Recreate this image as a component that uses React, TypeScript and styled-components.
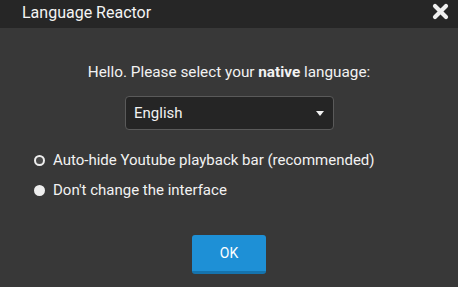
import styled, { createGlobalStyle } from 'styled-components'

const GlobalStyle = createGlobalStyle`
  html, body {
    margin: 0;
    padding: 0;
    background: #383838;
  }
  body {
    font-family: Roboto, 'Liberation Sans', sans-serif;
  }
`

const Dialog = styled.div`
  width: 458px;
  height: 287px;
  background: #383838;
  color: #f2f2f2;
  display: flex;
  flex-direction: column;
`

const TitleBar = styled.div`
  height: 28px;
  background: #262626;
  display: flex;
  align-items: center;
  justify-content: space-between;
  padding: 0 8px 0 22px;
`

const Title = styled.div`
  font-size: 16px;
  color: #f4f4f4;
  margin-top: -4px;
`

const CloseButton = styled.button`
  background: none;
  border: none;
  padding: 0;
  width: 20px;
  height: 20px;
  display: flex;
  align-items: center;
  justify-content: center;
  cursor: pointer;
  margin-top: -6px;
`

const Body = styled.div`
  flex: 1;
  display: flex;
  flex-direction: column;
  padding: 35px 0 0;
`

const Prompt = styled.div`
  font-size: 15.3px;
  text-align: center;
  line-height: 18px;
`

const SelectBox = styled.div`
  margin: 15px 0 0 125px;
  width: 209px;
  height: 34px;
  box-sizing: border-box;
  background: #252525;
  border: 1px solid #5a5a5a;
  border-radius: 4px;
  display: flex;
  align-items: center;
  justify-content: space-between;
  padding: 0 9px 0 8px;
  font-size: 15px;
`

const Caret = styled.span`
  width: 0;
  height: 0;
  border-left: 4px solid transparent;
  border-right: 4px solid transparent;
  border-top: 5px solid #f2f2f2;
`

const Options = styled.div`
  margin: 21px 0 0 34px;
  display: flex;
  flex-direction: column;
  gap: 12px;
`

const Option = styled.label`
  display: flex;
  align-items: center;
  gap: 8px;
  font-size: 15px;
  line-height: 18px;
`

const Radio = styled.span<{ $filled?: boolean }>`
  width: 11px;
  height: 11px;
  box-sizing: border-box;
  border-radius: 50%;
  border: 2px solid #eeeeee;
  background: ${p => (p.$filled ? '#eeeeee' : '#4a4a4a')};
`

const Footer = styled.div`
  display: flex;
  justify-content: center;
  margin-top: 36px;
`

const OkButton = styled.button`
  width: 74px;
  height: 39px;
  box-sizing: border-box;
  background: #1e90d6;
  border: none;
  border-bottom: 3px solid #1573ad;
  border-radius: 3px;
  color: #ffffff;
  font-family: Roboto, 'Liberation Sans', sans-serif;
  font-size: 14px;
  padding: 0;
`

export default function App() {
  return (
    <>
      <GlobalStyle />
      <Dialog>
        <TitleBar>
          <Title>Language Reactor</Title>
          <CloseButton aria-label='close'>
            <svg width='17' height='17' viewBox='0 0 17 17'>
              <path d='M3 3 L14 14 M14 3 L3 14' stroke='#f0f0f0' strokeWidth='4.2' strokeLinecap='round' />
            </svg>
          </CloseButton>
        </TitleBar>
        <Body>
          <Prompt>
            Hello. Please select your <strong>native</strong> language:
          </Prompt>
          <SelectBox>
            <span>English</span>
            <Caret />
          </SelectBox>
          <Options>
            <Option>
              <Radio />
              Auto-hide Youtube playback bar (recommended)
            </Option>
            <Option>
              <Radio $filled />
              Don't change the interface
            </Option>
          </Options>
          <Footer>
            <OkButton>OK</OkButton>
          </Footer>
        </Body>
      </Dialog>
    </>
  )
}
